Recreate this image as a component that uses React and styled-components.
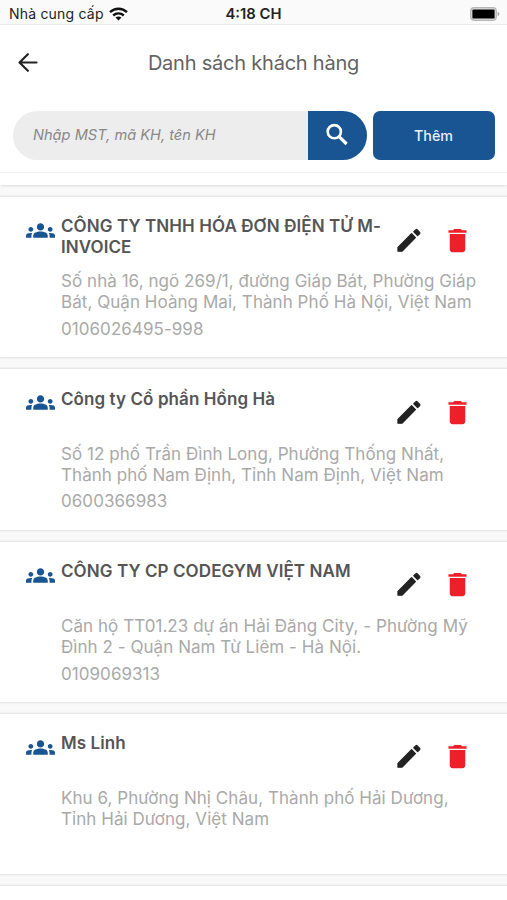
import styled, { createGlobalStyle } from "styled-components";
import { MdDelete, MdGroups } from "react-icons/md";

const GlobalStyle = createGlobalStyle`
  * {
    box-sizing: border-box;
  }
  body {
    margin: 0;
    background: #f9f9f9;
    font-family: Inter, "Liberation Sans", sans-serif;
  }
`;

const Screen = styled.div`
  width: 507px;
  height: 900px;
  overflow: hidden;
  background: #f9f9f9;
`;

const StatusBar = styled.div`
  display: grid;
  grid-template-columns: 1fr auto 1fr;
  align-items: center;
  height: 25px;
  padding: 3px 7px 0 9px;
  border-bottom: 1px solid #ececec;
  background: #fafafa;
  color: #222;
  font-size: 14px;
  line-height: 20px;
`;

const Carrier = styled.div`
  display: flex;
  align-items: center;
  gap: 5px;
  letter-spacing: 0.2px;
`;

const Clock = styled.div`
  padding-right: 2px;
  font-weight: 600;
  font-size: 14.8px;
`;

const BatterySlot = styled.div`
  display: flex;
  justify-content: flex-end;
`;

const Header = styled.header`
  height: 148px;
  border-bottom: 1px solid #efefef;
  background: #fff;
`;

const TitleBar = styled.div`
  display: grid;
  grid-template-columns: 40px 1fr 40px;
  align-items: center;
  height: 74px;
  padding: 0 13px;
`;

const BackButton = styled.button`
  display: flex;
  padding: 0;
  border: 0;
  background: none;
  color: #222;
`;

const Title = styled.h1`
  margin: 2px 0 0;
  color: #636363;
  font-size: 20px;
  font-weight: 430;
  letter-spacing: -0.22px;
  line-height: 26px;
  text-align: center;
`;

const SearchRow = styled.div`
  display: flex;
  gap: 6px;
  height: 49px;
  margin-top: 12px;
  padding: 0 12.5px 0 13px;
`;

const SearchBox = styled.div`
  display: flex;
  flex: 1;
  overflow: hidden;
  border-radius: 25px;
  background: #ededed;
`;

const SearchInput = styled.input`
  flex: 1;
  min-width: 0;
  padding: 0 20px 2px;
  border: 0;
  outline: 0;
  background: none;
  font: italic 400 14.6px Inter, sans-serif;
  &::placeholder {
    color: #888;
    opacity: 1;
  }
`;

const SearchButton = styled.button`
  display: flex;
  align-items: center;
  justify-content: center;
  width: 59px;
  padding: 0;
  border: 0;
  background: #185592;
  color: #fff;
`;

const AddButton = styled.button`
  width: 122px;
  padding: 0;
  border: 0;
  border-radius: 7px;
  background: #185592;
  color: #e9f1fa;
  font: 500 14.3px Inter, sans-serif;
`;

const List = styled.main`
  display: flex;
  flex-direction: column;
  gap: 11.8px;
`;

const Card = styled.article`
  display: flex;
  flex: none;
  flex-direction: column;
  height: ${(p) => (p.$sliver ? "12.2px" : "160.5px")};
  padding: ${(p) => (p.$sliver ? "0" : "19px 25px 0 26px")};
  background: #fff;
  box-shadow: ${(p) => (p.$sliver ? "0 2px 2px -1px rgba(0, 0, 0, 0.13)" : "0 0 2px 1px rgba(0, 0, 0, 0.1)")};
`;

const CardTop = styled.div`
  display: flex;
  height: 55.4px;
`;

const GroupIcon = styled(MdGroups)`
  flex: none;
  width: 29px;
  height: 29px;
  margin-right: 6px;
  color: #185592;
`;

const Name = styled.h2`
  flex: none;
  width: 332px;
  margin: 0.5px 0 0;
  color: #555;
  font-size: 17px;
  font-weight: 600;
  letter-spacing: 0.08px;
  line-height: 21px;
`;

const Actions = styled.div`
  display: flex;
  gap: 18px;
  padding-top: 8.6px;
`;

const IconButton = styled.button`
  display: flex;
  width: 31px;
  height: 31px;
  padding: 0;
  border: 0;
  background: none;
  color: ${(p) => p.$color};
`;

const Details = styled.div`
  padding-left: 35px;
  color: #a9a9a9;
  font-size: 17px;
  letter-spacing: 0.05px;
  line-height: 21px;
`;

const Line = styled.div`
  white-space: nowrap;
`;

const TaxCode = styled.div`
  margin-top: 5.6px;
`;

const customers = [
  {
    name: "CÔNG TY TNHH HÓA ĐƠN ĐIỆN TỬ M-INVOICE",
    address: ["Số nhà 16, ngõ 269/1, đường Giáp Bát, Phường Giáp", "Bát, Quận Hoàng Mai, Thành Phố Hà Nội, Việt Nam"],
    taxCode: "0106026495-998",
  },
  {
    name: "Công ty Cổ phần Hồng Hà",
    address: ["Số 12 phố Trần Đình Long, Phường Thống Nhất,", "Thành phố Nam Định, Tỉnh Nam Định, Việt Nam"],
    taxCode: "0600366983",
  },
  {
    name: "CÔNG TY CP CODEGYM VIỆT NAM",
    address: ["Căn hộ TT01.23 dự án Hải Đăng City, - Phường Mỹ", "Đình 2 - Quận Nam Từ Liêm - Hà Nội."],
    taxCode: "0109069313",
  },
  {
    name: "Ms Linh",
    address: ["Khu 6, Phường Nhị Châu, Thành phố Hải Dương,", "Tỉnh Hải Dương, Việt Nam"],
    taxCode: "",
  },
];

function WifiIcon() {
  return (
    <svg width="19" height="14" viewBox="0 0 19 14" fill="none" stroke="#111" strokeWidth="2.4">
      <path d="M1 5.2C5.8.6 13.2.6 18 5.2" />
      <path d="M4.2 8.5c3-2.8 7.6-2.8 10.6 0" />
      <path d="M9.5 13.4 6.5 10.5c1.7-1.5 4.3-1.5 6 0z" fill="#111" stroke="none" />
    </svg>
  );
}

function BatteryIcon() {
  return (
    <svg width="30" height="14" viewBox="0 0 30 14">
      <rect x="0.7" y="0.7" width="25.6" height="12.6" rx="3.5" fill="#ddd" stroke="#b5b5b5" strokeWidth="1.2" />
      <rect x="2.4" y="2.4" width="22.2" height="9.2" rx="1.2" fill="#000" />
      <path d="M27.6 4.8c2.4.8 2.4 3.6 0 4.4z" fill="#aaa" />
    </svg>
  );
}

function BackIcon() {
  return (
    <svg
      width="29"
      height="29"
      viewBox="0.5 0 29 29"
      fill="none"
      stroke="currentColor"
      strokeWidth="2.2"
      strokeLinecap="round"
      strokeLinejoin="round"
    >
      <path d="M24 14.5H7M15.4 6.2 7 14.5l8.4 8.3" />
    </svg>
  );
}

function SearchIcon() {
  return (
    <svg width="30" height="30" viewBox="3.3 4.3 30 30" fill="none" stroke="currentColor">
      <circle cx="15.6" cy="15" r="6.6" strokeWidth="2.6" />
      <path d="M20.2 19.6l7.7 7.7" strokeWidth="3.2" />
    </svg>
  );
}

function PencilIcon() {
  return (
    <svg
      width="31"
      height="31"
      viewBox="0 0 31 31"
      fill="currentColor"
      stroke="currentColor"
      strokeWidth="1.3"
      strokeLinejoin="round"
    >
      <path d="M5 22.4 18.6 8.8l3.8 3.8L8.9 26.2H5z" />
      <path d="M20.8 6.8l1.9-1.9q.8-.7 1.6 0l2.2 2.2q.8.8 0 1.6l-1.9 1.9z" />
    </svg>
  );
}

function CustomerCard({ customer }) {
  return (
    <Card>
      <CardTop>
        <GroupIcon />
        <Name>{customer.name}</Name>
        <Actions>
          <IconButton $color="#222" aria-label="Sửa">
            <PencilIcon />
          </IconButton>
          <IconButton $color="#ed1f28" aria-label="Xóa">
            <MdDelete size={31} />
          </IconButton>
        </Actions>
      </CardTop>
      <Details>
        {customer.address.map((line) => (
          <Line key={line}>{line}</Line>
        ))}
        <TaxCode>{customer.taxCode}</TaxCode>
      </Details>
    </Card>
  );
}

export default function App() {
  return (
    <Screen>
      <GlobalStyle />
      <StatusBar>
        <Carrier>
          Nhà cung cấp
          <WifiIcon />
        </Carrier>
        <Clock>4:18 CH</Clock>
        <BatterySlot>
          <BatteryIcon />
        </BatterySlot>
      </StatusBar>
      <Header>
        <TitleBar>
          <BackButton aria-label="Quay lại">
            <BackIcon />
          </BackButton>
          <Title>Danh sách khách hàng</Title>
        </TitleBar>
        <SearchRow>
          <SearchBox>
            <SearchInput placeholder="Nhập MST, mã KH, tên KH" />
            <SearchButton aria-label="Tìm kiếm">
              <SearchIcon />
            </SearchButton>
          </SearchBox>
          <AddButton>Thêm</AddButton>
        </SearchRow>
      </Header>
      <List>
        <Card $sliver />
        {customers.map((customer) => (
          <CustomerCard key={customer.name} customer={customer} />
        ))}
        <Card />
      </List>
    </Screen>
  );
}
